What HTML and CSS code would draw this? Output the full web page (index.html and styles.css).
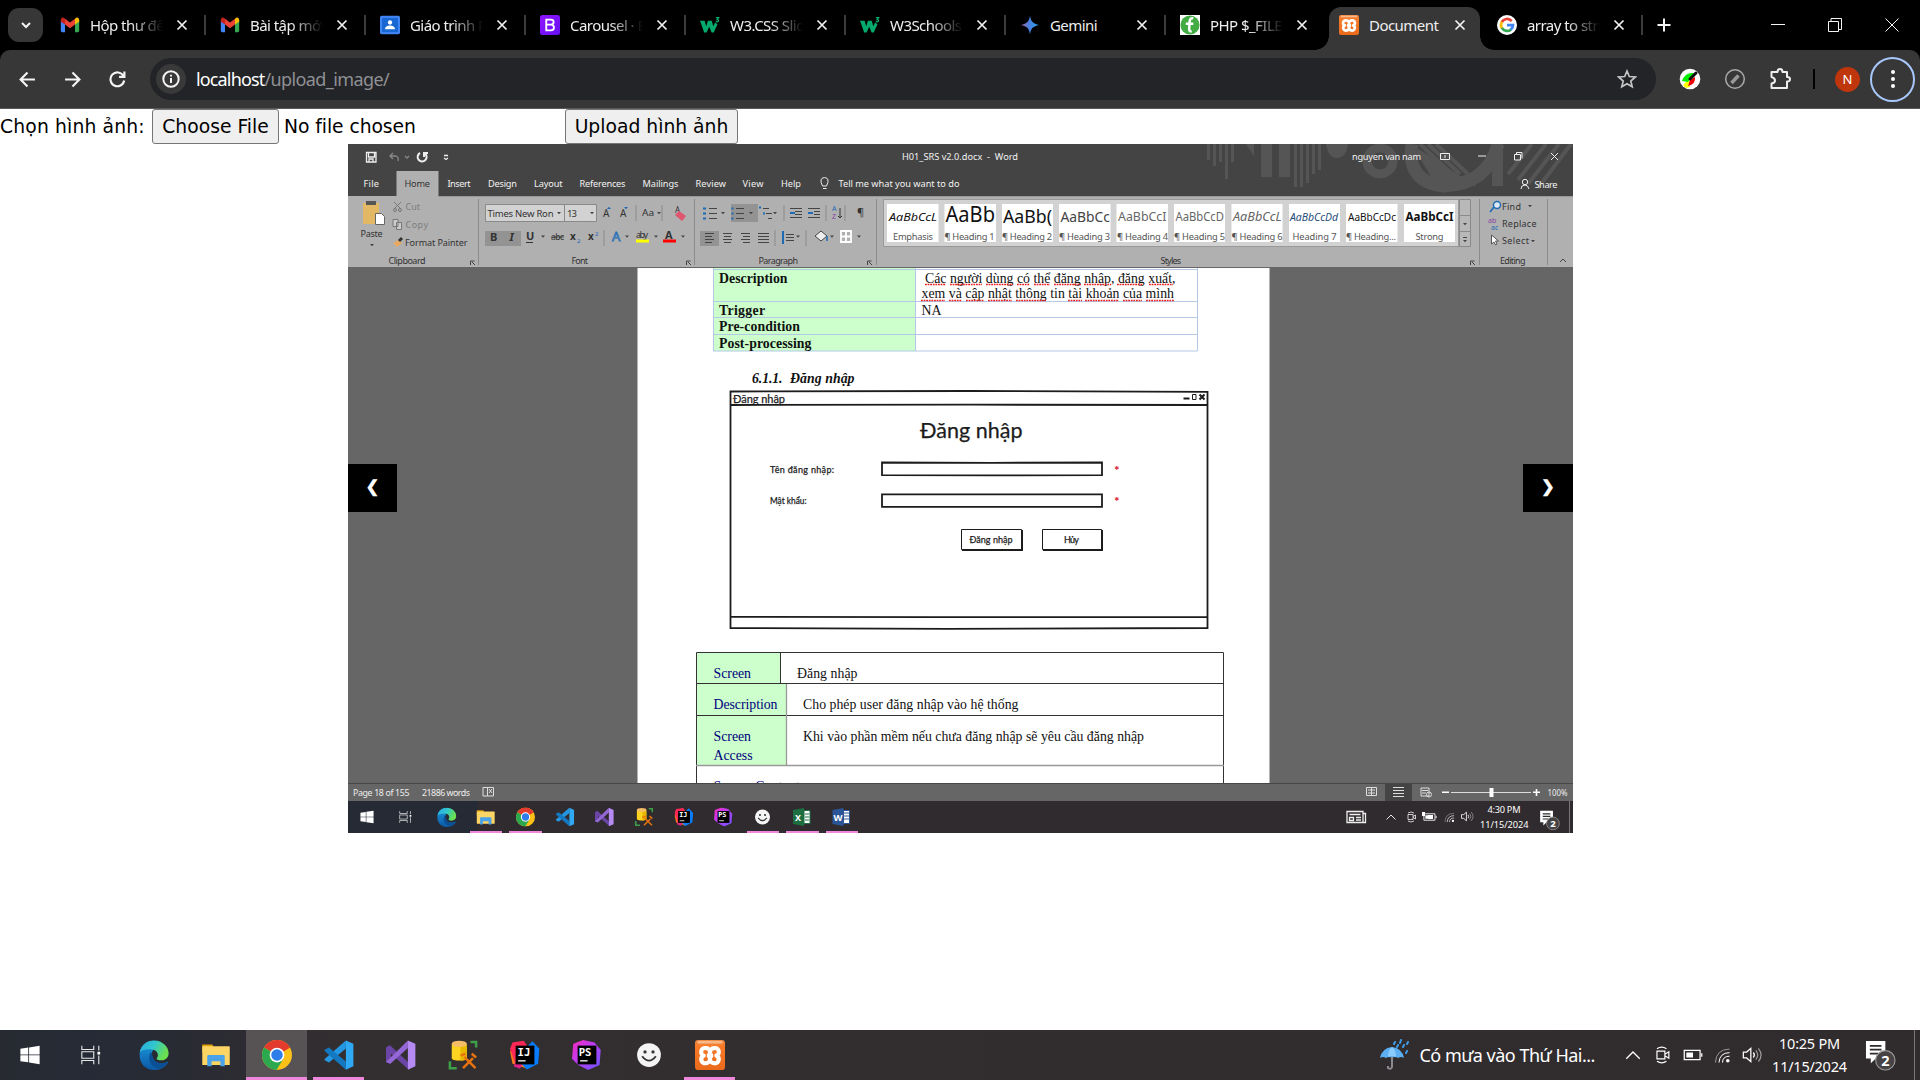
FILE: index.html
```html
<!DOCTYPE html>
<html lang="vi">
<head>
<meta charset="utf-8">
<title>Document</title>
<link rel="stylesheet" href="styles.css">
</head>
<body>
<svg class="defs" width="0" height="0" aria-hidden="true">
  <defs>
    <linearGradient id="edgeA" x1="0" y1="0" x2="1" y2="0.4"><stop offset="0" stop-color="#2aa7e0"/><stop offset=".5" stop-color="#30c6cf"/><stop offset="1" stop-color="#6be04f"/></linearGradient>
    <linearGradient id="edgeB" x1="0" y1="0" x2="0" y2="1"><stop offset="0" stop-color="#1a9be0"/><stop offset="1" stop-color="#0c59a4"/></linearGradient>
    <linearGradient id="gem" x1="0" y1="0" x2="1" y2="0"><stop offset="0" stop-color="#a56a9c"/><stop offset=".45" stop-color="#4a7fe0"/><stop offset="1" stop-color="#2aa3ea"/></linearGradient>
    <linearGradient id="bs" x1="0" y1="0" x2="1" y2="1"><stop offset="0" stop-color="#9013fe"/><stop offset="1" stop-color="#6610f2"/></linearGradient>
    <linearGradient id="ora" x1="0" y1="0" x2="0" y2="1"><stop offset="0" stop-color="#f08b45"/><stop offset=".2" stop-color="#f77b28"/><stop offset="1" stop-color="#ea6a1c"/></linearGradient>
    <linearGradient id="psg" x1="0" y1="0" x2="1" y2="1"><stop offset="0" stop-color="#f62ab8"/><stop offset=".4" stop-color="#c23af0"/><stop offset="1" stop-color="#6b57ff"/></linearGradient>
  </defs>
  <symbol id="i-gmail" viewBox="0 0 24 24"><path fill="#4285f4" d="M1 6v13c0 1 .7 1.700 1.700 1.700H6V10z"/><path fill="#34a853" d="M23 6v13c0 1-.7 1.700-1.700 1.700H18V10z"/><path fill="#ea4335" d="M6 11.500V4.500l6 4.600 6-4.600v7L12 16z"/><path fill="#c5221f" d="M1 6c0-3 3-4 5-1.500v7L1 8z"/><path fill="#fbbc04" d="M23 6c0-3-3-4-5-1.500v7L23 8z"/></symbol>
  <symbol id="i-class" viewBox="0 0 24 24"><rect y="1" width="24" height="22" rx="2" fill="#4285f4"/><rect x="2.500" y="3.500" width="19" height="17" fill="#1967d2"/><circle cx="12" cy="9" r="2.600" fill="#fff"/><path fill="#fff" d="M6 17c0-3 3-4.500 6-4.500s6 1.500 6 4.500z"/></symbol>
  <symbol id="i-boot" viewBox="0 0 24 24"><rect width="24" height="24" rx="3" fill="url(#bs)"/><path fill="none" stroke="#fff" stroke-width="2.200" d="M7.500 5.500h5.500c4.500 0 4.500 6 0 6H7.500zM7.500 11.500H13c5 0 5 7 0 7H7.500z"/></symbol>
  <symbol id="i-w3" viewBox="0 0 24 24"><path fill="#04aa6d" d="M0 7h5.500l2 6.500L9.500 7H14l2 6.500L18 9l3 2-4.500 10H14l-3-7-3 7H5z"/><path fill="none" stroke="#04aa6d" stroke-width="1.500" d="M19 3h3.500l-2 2.500c3 0 2 3.500-1.500 2.500"/></symbol>
  <symbol id="i-gem" viewBox="0 0 24 24"><path fill="url(#gem)" d="M12 1c1.200 7 3.500 9.500 11 11-7.500 1.500-9.800 4-11 11-1.200-7-3.500-9.500-11-11 7.500-1.500 9.800-4 11-11z"/></symbol>
  <symbol id="i-php" viewBox="0 0 24 24"><rect width="24" height="24" fill="#fff"/><circle cx="12" cy="12" r="11.500" fill="#43ab43"/><path fill="none" stroke="#fff" stroke-width="3" d="M16 4q-4-1-4.500 4l-.5 9q0 3 3 2.500M7 10.500h9"/></symbol>
  <symbol id="i-xampp" viewBox="0 0 24 24"><rect width="24" height="24" rx="2.500" fill="url(#ora)"/><rect x="2" y=".8" width="20" height="2" rx="1" fill="#f6b98c"/><path fill="none" stroke="#fff" stroke-width="3.300" stroke-linejoin="round" d="M9 6.500C4 5.500 4 12 7 12.500 3.500 14 5 19.500 9 18.500c2 0 3-2 3-4 0 2 1 4 3 4 4 1 5.500-4.500 2-6 3-.5 3-7-2-6-2 0-3 2-3 3.500 0-1.500-1-3.500-3-3.500zM9.500 12.500h5"/></symbol>
  <symbol id="i-google" viewBox="0 0 24 24"><circle cx="12" cy="12" r="12" fill="#fff"/><g fill="none" stroke-width="3.300"><path stroke="#ea4335" d="M17.600 7.300A7.200 7.200 0 0 0 5.800 8.500"/><path stroke="#fbbc04" d="M5.900 8.300a7.200 7.200 0 0 0 0 7.400"/><path stroke="#34a853" d="M5.800 15.500a7.200 7.200 0 0 0 11 1.800"/><path stroke="#4285f4" d="M12 12h7.200q0 3.300-2.700 5.600"/></g></symbol>
  <symbol id="i-x" viewBox="0 0 12 12"><path fill="none" stroke="#f2f2f2" stroke-width="1.700" d="M1.500 1.500l9 9M10.500 1.500l-9 9"/></symbol>

  <symbol id="i-win" viewBox="0 0 24 24"><path fill="#fff" d="M1.500 5.200l8.600-1.300v7.600H1.500zM11 3.700L22.500 2v9.500H11zM1.500 12.400h8.600V20l-8.600-1.300zM11 12.400h11.500V22L11 20.200z"/></symbol>
  <symbol id="i-task" viewBox="0 0 24 24"><path fill="none" stroke="#e8e8e8" stroke-width="1.200" d="M2 2v4h13V2M2 22v-4h13v4M2 8.500h13v7H2zM20.500 2v5M20.500 12.500V22"/><rect x="19" y="8.500" width="3" height="3" fill="#fff"/></symbol>
  <symbol id="i-edge" viewBox="0 0 24 24"><path fill="url(#edgeB)" d="M.5 11C1 4.500 6 .5 12 .5L18 8c-1.500-1.500-5-2.500-7 .5-2.500 4-.5 8 3.500 9.500 3.500 1.200 6 .3 8-.5.8-.3.900.1.600.600C21 21.500 17 24 12 24 5 24 0 18.500.5 11z"/><path fill="#0b4f94" d="M9.500 9.500C6 15 9.500 23 17 22.500c2.500-.5 4.500-2 6-4.500.200-.500-.1-.800-.6-.5-4.900 2.300-10.900.5-11.400-4.500z"/><path fill="url(#edgeA)" d="M.6 10C1.500 4 6.300.3 12 .3c7 0 11.700 5.200 11.700 10.200 0 3.500-2.700 5.700-6 5.700-2.200 0-4-.8-3.500-1.700 2.300-2.500.3-6.700-4-7C6 7.200 2 8 .6 10z"/></symbol>
  <symbol id="i-folder" viewBox="0 0 24 24"><path fill="#e3a008" d="M1 3.500h8l1.500 2.500H20v4H1z"/><rect x="1" y="5" width="22" height="15" rx=".5" fill="#fdd565"/><path fill="#4aa3e8" d="M5 21v-8q0-1 1-1h12q1 0 1 1v8h-3.500v-4h-7v4z"/></symbol>
  <symbol id="i-chrome" viewBox="0 0 24 24"><circle cx="12" cy="12" r="12" fill="#fbc116"/><path fill="#e33b2e" d="M12 12L1.600 6A12 12 0 0 1 22.400 6z"/><path fill="#2ca94f" d="M12 12L1.600 6a12 12 0 0 0 10 18l5.500-9z"/><path fill="#e33b2e" d="M12 6h10.400L12 12z"/><circle cx="12" cy="12" r="5.900" fill="#fff"/><circle cx="12" cy="12" r="4.600" fill="#2f7de8"/></symbol>
  <symbol id="i-code" viewBox="0 0 24 24"><path fill="#2497e3" d="M17.500.3v6.500L4 18 .5 16.200v-1z"/><path fill="#1478c0" d="M17.500 23.700v-6.500L4 6 .5 7.800v1z"/><path fill="#30a9f4" d="M17.500.3l6 2.700v18l-6 2.700z"/></symbol>
  <symbol id="i-vs" viewBox="0 0 24 24"><path fill="#6a45a5" d="M0 6l3-2 15 14v5.500L4 11v6l-1 2-3-1.500z"/><path fill="#9467d6" d="M0 17.500L17.500.3v6L3.500 19z"/><path fill="#b58af2" d="M17.500.3l6 2.700v18l-6 2.700z"/></symbol>
  <symbol id="i-ssms" viewBox="0 0 24 24"><path fill="#fdd321" d="M3 3v11.500c0 2.500 12 2.500 12 0V3z"/><path fill="#e8b800" d="M10 5h5v9.500c0 1.200-2 1.800-5 1.900z"/><ellipse cx="9" cy="3" rx="6" ry="2.500" fill="#f4bd66"/><path fill="none" stroke="#3da048" stroke-width="2" d="M18 1.500h4.500V6M1.500 17v5.500H7"/><path fill="none" stroke="#e8730e" stroke-width="2" d="M12 22.500l8-8M13 13.500l9 9M10 12.500l4-1.500M19 11l3.500 3"/></symbol>
  <symbol id="i-ij" viewBox="0 0 24 24"><path fill="#ff7a1a" d="M0 9l7-4 7 18-12-4z"/><path fill="#fe2857" d="M2 2l9-1.500 4 6L5 21 0 7z"/><path fill="#087cfa" d="M14 5l4-4 5.500 6-1 12-9 4.500L9 19z"/><path fill="#e0218a" d="M5 15l-2 6 5 2 3-6z"/><rect x="4.500" y="4.500" width="15" height="15"/><text x="6" y="12.500" class="jb">IJ</text><path fill="#ccc" d="M6.500 16h6v1.300h-6z"/></symbol>
  <symbol id="i-ps" viewBox="0 0 24 24"><path fill="url(#psg)" d="M1 3l8-3 9 2 5 6-1 12-9 4-8-4-5-5z"/><rect x="4.500" y="4.500" width="15" height="15"/><text x="5.300" y="12.500" class="jb">PS</text><path fill="#ccc" d="M6.500 16h6v1.300h-6z"/></symbol>
  <symbol id="i-smile" viewBox="0 0 24 24"><circle cx="12" cy="12" r="9.500" fill="#f4f4f4"/><circle cx="8.800" cy="9.500" r="1.300" fill="#333"/><circle cx="15.200" cy="9.500" r="1.300" fill="#333"/><path fill="none" stroke="#333" stroke-width="1.500" d="M6.500 13q5.500 7 11 0"/></symbol>
  <symbol id="i-chev" viewBox="0 0 24 24"><path fill="none" stroke="#fff" stroke-width="1.800" d="M3 17l9-9 9 9"/></symbol>
  <symbol id="i-cam" viewBox="0 0 24 24"><path fill="none" stroke="#fff" stroke-width="1.500" d="M5 7h10v10H5zM15 11l5-3v8l-5-3M5 4q6-4 12 0M5 20q6 4 12 0"/></symbol>
  <symbol id="i-bat" viewBox="0 0 24 24"><path fill="none" stroke="#fff" stroke-width="1.500" d="M1.500 6.500h19v11h-19zM22.500 10v4"/><rect x="4" y="9" width="8" height="6" fill="#fff"/></symbol>
  <symbol id="i-wifi" viewBox="0 0 24 24"><g fill="none" stroke="#fff" stroke-width="1.400"><path stroke="#999" d="M2 22Q3 3 22 3"/><path d="M7 22Q8 8 22 8M12 22q0-9 10-9"/></g><circle cx="19.500" cy="19.500" r="2.500" fill="#fff"/></symbol>
  <symbol id="i-vol" viewBox="0 0 24 24"><g fill="none" stroke="#fff" stroke-width="1.500"><path d="M1 8.500h4L10 4v16l-5-4.500H1zM13 9q2.500 3 0 6"/><path stroke="#999" d="M16 6.500q4.500 5.500 0 11M19 4q6.500 8 0 16"/></g></symbol>
  <symbol id="i-note" viewBox="0 0 32 32"><path fill="#fff" d="M1 1h20v18H11l-5 5v-5H1z"/><path stroke="#302b2e" stroke-width="1.700" d="M5 6h12M5 10h12M5 14h9"/><circle cx="21" cy="21" r="10" fill="#474345" stroke="#999" stroke-width="1.200"/><text x="21" y="26.500" text-anchor="middle" class="badge-num">2</text></symbol>
</svg>

<header class="browser">
  <div class="tabs">
    <div class="tab-search"><svg width="12" height="12" viewBox="0 0 12 12"><path d="M2 4l4 4 4-4" class="ln thick"/></svg></div>
    <div class="tab"><svg class="fav"><use href="#i-gmail"/></svg><span class="ttl fade">Hộp thư đến</span><svg class="cls"><use href="#i-x"/></svg></div>
    <div class="tab"><svg class="fav"><use href="#i-gmail"/></svg><span class="ttl fade">Bài tập mới</span><svg class="cls"><use href="#i-x"/></svg></div>
    <div class="tab"><svg class="fav"><use href="#i-class"/></svg><span class="ttl fade">Giáo trình P</span><svg class="cls"><use href="#i-x"/></svg></div>
    <div class="tab"><svg class="fav"><use href="#i-boot"/></svg><span class="ttl fade">Carousel · B</span><svg class="cls"><use href="#i-x"/></svg></div>
    <div class="tab"><svg class="fav"><use href="#i-w3"/></svg><span class="ttl fade">W3.CSS Slid</span><svg class="cls"><use href="#i-x"/></svg></div>
    <div class="tab"><svg class="fav"><use href="#i-w3"/></svg><span class="ttl fade">W3Schools</span><svg class="cls"><use href="#i-x"/></svg></div>
    <div class="tab"><svg class="fav"><use href="#i-gem"/></svg><span class="ttl">Gemini</span><svg class="cls"><use href="#i-x"/></svg></div>
    <div class="tab last"><svg class="fav"><use href="#i-php"/></svg><span class="ttl fade">PHP $_FILES</span><svg class="cls"><use href="#i-x"/></svg></div>
    <div class="tab active"><svg class="fav"><use href="#i-xampp"/></svg><span class="ttl">Document</span><svg class="cls"><use href="#i-x"/></svg></div>
    <div class="tab"><svg class="fav"><use href="#i-google"/></svg><span class="ttl fade">array to stri</span><svg class="cls"><use href="#i-x"/></svg></div>
    <svg class="plus" width="14" height="14" viewBox="0 0 14 14"><path d="M7 .5v13M.5 7h13" class="ln thick"/></svg>
    <div class="winctl">
      <svg width="14" height="14" viewBox="0 0 14 14"><path d="M0 6.500h14" class="ln"/></svg>
      <svg width="14" height="14" viewBox="0 0 14 14"><path d="M.5 3.500h10v10h-10zM3 3V.5h10.500v11H11" class="ln"/></svg>
      <svg width="14" height="14" viewBox="0 0 14 14"><path d="M.5.5l13 13M13.500.5l-13 13" class="ln"/></svg>
    </div>
  </div>
  <div class="toolbar">
    <svg class="nav" viewBox="0 0 16 16"><path d="M15 8H2M8 1.500L1.500 8 8 14.500" class="ln thick"/></svg>
    <svg class="nav" viewBox="0 0 16 16"><path d="M1 8h13M8 1.500L14.500 8 8 14.500" class="ln thick"/></svg>
    <svg class="nav" viewBox="0 0 16 16"><path d="M13.500 4.500A6.500 6.500 0 1 0 14.300 9M14.500.5v5h-5" class="ln thick"/></svg>
    <div class="omnibox">
      <span class="info"><svg width="18" height="18" viewBox="0 0 18 18"><circle cx="9" cy="9" r="7.700" class="ln thick"/><path d="M9 8v5M9 4.800v1.800" class="ln thick"/></svg></span>
      <span class="url">localhost<span class="path">/upload_image/</span></span>
      <svg class="star" width="20" height="20" viewBox="0 0 20 20"><path d="M10 2l2.300 5.500 6 .5-4.500 4 1.400 5.800L10 14.700l-5.200 3.100L6.200 12 1.700 8l6-.5z"/></svg>
    </div>
    <svg class="ext" viewBox="0 0 22 22"><circle cx="11" cy="11" r="10.300" fill="#fff"/><path fill="#ff0" d="M4 17l6-6 1 8-4 1z"/><path fill="#0e0" d="M3 13q3-9 12-8l-6 9z"/><path fill="#e00" d="M9 18q8-2 7-9l-5 3z"/><path stroke="#111" stroke-width="3" stroke-linecap="round" d="M11 11l6-6"/></svg>
    <svg class="ext" viewBox="0 0 22 22"><circle cx="11" cy="11" r="9.300" fill="none" stroke="#aaa" stroke-width="1.500"/><path stroke="#999" stroke-width="3.500" d="M7.500 15l7-7.500"/></svg>
    <svg class="ext" viewBox="0 0 22 22"><path fill="none" stroke="#eee" stroke-width="2" stroke-linejoin="round" d="M2.500 4h6q0-3 2.500-3t2.500 3h4.500v5q3 0 3 2.300T18 13.500V20H2.500v-4.500q3.500-.5 3.500-3T2.500 9z"/></svg>
    <i class="bar"></i>
    <span class="avatar">N</span>
    <span class="menu"><i></i><i></i><i></i></span>
  </div>
</header>

<main class="page">
  <form class="upload">
    <label>Chọn hình ảnh:</label>
    <span class="file"><button type="button">Choose File</button><span class="none">No file chosen</span></span>
    <button type="button">Upload hình ảnh</button>
  </form>
  <section class="slides">
    <svg class="slide" width="1225" height="689" viewBox="348 144 1225 689">
      <rect x="348" y="144" width="1225" height="689" fill="#666"/>
      <rect x="348" y="144" width="1225" height="52" fill="#444"/>
      <g fill="#555">
        <path d="M1207 144h3v16h-3zM1213 144h3v22h-3zM1219 144h3v18h-3zM1225 144h3v35h-3zM1231 144h3v18h-3zM1246 144h8v12zM1261 144h11v33h-11zM1279 144h11v33h-11zM1294 144h3v43h-3zM1300 144h3v43h-3zM1306 144h3v39h-3zM1312 144h3v30h-3zM1318 144h3v26h-3z"/>
        <path d="M1326 144h22q-2 14-11 14t-11-14z"/>
        <path d="M1411 144l65 42h-39zM1492 144h11v42h-11z"/>
      </g>
      <g fill="none" stroke="#555"><circle cx="1380" cy="161" r="13" stroke-width="9"/><path stroke-width="13" d="M1412 144q-6 38 32 42 44-2 54-42"/><path stroke-width="4" d="M1420 144l32 30M1428 144l32 30M1436 144l32 30M1518 180l28-36M1528 184l31-40M1538 188l33-44M1508 174l24-30"/></g>

      <g fill="none" stroke="#eee" stroke-width="1.300"><path d="M366.500 152.500h9.500v9.500h-9.500zM368.500 153v4h6v-4M369 162v-3h4v3"/><path stroke="#888" d="M393 153l-3 3 3 3M390 156h6q3 1 2 5"/><path stroke-width="2" d="M420 153a4.500 4.500 0 1 0 5 .5M424 157v-4h4"/><path stroke="#888" d="M405 156l2 2 2-2"/><path d="M444 155.500h4M444 158l2 1.500 2-1.500"/></g>
      <g class="ui" fill="#f2f2f2" font-size="9.200">
        <text x="902" y="160" textLength="116">H01_SRS v2.0.docx &#160;- &#160;Word</text>
        <text x="1352" y="160" textLength="69">nguyen van nam</text>
        <text x="363.500" y="187" textLength="15.500">File</text>
        <rect x="396.500" y="171" width="42" height="26" fill="#b0b0b0"/>
        <text x="404.500" y="187" textLength="25.500" fill="#333">Home</text>
        <text x="447.500" y="187" textLength="23">Insert</text><text x="488" y="187" textLength="29">Design</text><text x="534" y="187" textLength="28.500">Layout</text><text x="579.500" y="187" textLength="46">References</text><text x="642.500" y="187" textLength="36">Mailings</text><text x="695.500" y="187" textLength="30.500">Review</text><text x="742.500" y="187" textLength="21">View</text><text x="781" y="187" textLength="20">Help</text><text x="838.500" y="187" textLength="121">Tell me what you want to do</text><text x="1534.500" y="188" textLength="23">Share</text>
      </g>
      <g fill="none" stroke="#eee"><path d="M822.500 186q-4-8 2-8.500 6 .5 2 8.500zM823 188.500h3.500M1440.500 153.500h9v6h-9zM1445 158v-3M1478 156h8M1514.500 154.500h6v5.500h-6zM1516.500 154v-1.500h5.500v6M1551 153l7 7M1558 153l-7 7M1521 189q0-4 4-4 3 0 4 4"/><circle cx="1525" cy="182" r="2.700"/></g>

      <rect x="348" y="196" width="1225" height="71" fill="#b0b0b0"/>
      <path stroke="#999" d="M438 196.500h1135"/>
      <path stroke="#8a8a8a" d="M478.500 199v66M694.500 199v66M876.500 199v66M1479.500 199v66M1547.500 199v66M636 205v16M662 205v16M604 230v16M784 205v16M826 205v16M845 205v16M775 230v16M806 230v16"/>
      <path fill="#e3b864" d="M363 203h16v21h-16z"/><path fill="#555" d="M366 201h10v4h-10z"/><path fill="#fff" stroke="#666" d="M375.500 213.500h6l3 3v8h-9z"/>
      <g fill="none" stroke="#777"><path d="M394 202l7 7M401 202l-7 7"/><circle cx="395" cy="210" r="1.500"/><circle cx="400" cy="210" r="1.500"/><path fill="#ccc" d="M393 219.500h5v7h-5zM396.500 222.500h5v7h-5z"/></g>
      <path fill="#e9a960" d="M393 243l6-3 3 3-5 4z"/><path stroke="#333" stroke-width="3" d="M399 241l3-3"/>
      <g class="ui" font-size="9" fill="#333">
        <text x="405.500" y="210" textLength="14.500" fill="#7d7d7d">Cut</text><text x="405.500" y="228" textLength="22.500" fill="#7d7d7d">Copy</text><text x="405" y="246" textLength="62.500">Format Painter</text><text x="360.500" y="237" textLength="22">Paste</text>
        <text x="388.500" y="264" textLength="37">Clipboard</text><text x="571.500" y="264" textLength="16.500">Font</text><text x="758.500" y="264" textLength="39.500">Paragraph</text><text x="1160.500" y="264" textLength="20.500">Styles</text><text x="1500" y="264" textLength="25.500">Editing</text>
        <text x="1502" y="210" textLength="19">Find</text><text x="1502" y="227" textLength="34.500">Replace</text><text x="1502" y="244" textLength="27">Select</text>
      </g>
      <g fill="#d2d2d2" stroke="#8a8a8a"><path d="M485.500 204.500h79v17h-79zM564.500 204.500h32v17h-32z"/></g>
      <g fill="#939393"><path d="M485 231h36v15h-36zM731 204h27v18h-27zM700 231h19v15h-19z"/></g>
      <g class="ui" fill="#333">
        <text x="487.500" y="216.500" font-size="9.500" textLength="66">Times New Ron</text><text x="567" y="216.500" font-size="9.500" textLength="10">13</text>
        <text x="603" y="217" font-size="10">A</text><text x="620" y="217" font-size="10">A</text><text x="642" y="216" font-size="9.500" textLength="12" lengthAdjust="spacingAndGlyphs">Aa</text><text x="675" y="213" font-size="8">A</text>
        <text x="490" y="240.500" font-size="11" font-weight="700">B</text><text x="509.500" y="240.500" font-size="11" font-weight="700" class="it">I</text><text x="526" y="240" font-size="11" font-weight="700">U</text><text x="551" y="240" font-size="8.500" text-decoration="line-through" textLength="13">abc</text><text x="570" y="240" font-size="10" font-weight="700">x</text><text x="588" y="240" font-size="10" font-weight="700">x</text><text x="577" y="243" font-size="6" fill="#1f6ab5">2</text><text x="595" y="236" font-size="6" fill="#1f6ab5">2</text>
        <text x="612" y="241" font-size="13" fill="#b0c8e0" stroke="#2a6fb3" stroke-width=".8">A</text><text x="636" y="238" font-size="9" textLength="12">aby</text><text x="665" y="239" font-size="11" font-weight="700">A</text><text x="857" y="216" font-size="11">¶</text>
        <text x="832" y="211" font-size="7" fill="#1f6ab5">A</text><text x="832" y="219" font-size="7" fill="#8543a5">Z</text>
        <text x="1488" y="223" font-size="7" fill="#8543a5">ab</text><text x="1491" y="230" font-size="7" fill="#1f6ab5">ac</text>
      </g>
      <path stroke="#333" d="M526 242.500h7M840 208v10l-2-2M840 218l2-2" fill="none"/>
      <path fill="#ff0" d="M636 239.500h13v3h-13z"/><path fill="red" d="M663 239.500h13v3h-13z"/><path fill="#e0566e" d="M675 215l4-4 7 5-4 5z"/>
      <g fill="#444"><path d="M370 244h4l-2 2.300zM557 212h4l-2 2.300zM590 212h4l-2 2.300zM541 235.500h4l-2 2.300zM657 212h4l-2 2.300zM625 235.500h4l-2 2.300zM654 235.500h4l-2 2.300zM681 235.500h4l-2 2.300zM721 212h4l-2 2.300zM749 212h4l-2 2.300zM773 212h4l-2 2.300zM796 235.500h4l-2 2.300zM830 235.500h4l-2 2.300zM857 235.500h4l-2 2.300zM1528 205h4l-2 2.300zM1531 240h4l-2 2.300z"/></g>
      <path fill="#1f6ab5" d="M607 209l2-2.300 2 2.300zM624 207l2 2.300 2-2.300z"/>
      <g fill="none" stroke="#444"><path d="M709 208.500h8M709 213.500h8M709 218.500h8M736 208.500h8M736 213.500h8M736 218.500h8M763 208.500h6M766 213.500h6M768 218.500h4M790 208.500h12M795 211.500h7M795 214.500h7M790 217.500h12M808 208.500h12M814 211.500h6M814 214.500h6M808 217.500h12M705 233.500h9M705 236.500h7M705 239.500h9M705 242.500h7M723 233.500h9M724 236.500h7M723 239.500h9M724 242.500h7M741 233.500h9M743 236.500h7M741 239.500h9M743 242.500h7M758 233.500h11M758 236.500h11M758 239.500h11M758 242.500h11M786 234.500h8M786 237.500h8M786 240.500h8"/><path stroke="#1f6ab5" stroke-width="2" d="M703 208.500h3M703 213.500h3M703 218.500h3M731.500 208.500h2M731.500 213.500h2M731.500 218.500h2M759 207.500h2M763 213.500h2M790 213h5M808 213h5M783 231v13"/><path fill="#eee" d="M815 236l6-5 6 5-6 5z"/><path stroke="#1f6ab5" stroke-width="1.500" d="M827 236v5"/><path stroke="#fff" stroke-width="1.800" d="M841 231h10v11h-10zM846 231v11M841 236.500h10"/><path d="M470.500 265v-4h4M472 262l3 3M686.500 265v-4h4M688 262l3 3M867.500 265v-4h4M869 262l3 3M1470.500 265v-4h4M1472 262l3 3M1560 262l3-3 3 3"/><path stroke="#1f6ab5" stroke-width="1.600" d="M1494 207l-4 5"/><circle cx="1497" cy="205" r="3.500" fill="#dfe9f3" stroke="#1f6ab5" stroke-width="1.500"/><path fill="#fff" stroke="#555" d="M1491.500 235v9l2.500-2 1.500 3 1.500-1-1.500-3h3z"/></g>

      <rect x="883.500" y="199.500" width="575" height="47" fill="#d2d2d2" stroke="#999"/>
      <g fill="#fff"><path d="M887 204h51.500v38H887zM944.500 204h51.500v38h-51.500zM1002 204h51v38h-51zM1059 204h51.500v38H1059zM1116.500 204h51.500v38h-51.500zM1174 204h51v38h-51zM1231.500 204h51v38h-51zM1289 204h51v38h-51zM1346 204h51.500v38H1346zM1404 204h51v38h-51z"/></g>
      <g class="ui" fill="#111">
        <text x="889" y="220.500" font-size="11.500" class="it" textLength="48" lengthAdjust="spacingAndGlyphs">AaBbCcL</text><text x="945.500" y="222.300" font-size="22" textLength="49.500" lengthAdjust="spacingAndGlyphs">AaBb</text><text x="1003" y="222.500" font-size="17.500" textLength="49" lengthAdjust="spacingAndGlyphs">AaBb(</text><text x="1060.500" y="221.500" font-size="15" fill="#444" textLength="49.500" lengthAdjust="spacingAndGlyphs">AaBbCc</text><text x="1118" y="221" font-size="13" fill="#666" textLength="48.500" lengthAdjust="spacingAndGlyphs">AaBbCcI</text><text x="1175.500" y="220.500" font-size="12" fill="#666" textLength="48.500" lengthAdjust="spacingAndGlyphs">AaBbCcD</text><text x="1233" y="220.500" font-size="12" class="it" fill="#666" textLength="48.500" lengthAdjust="spacingAndGlyphs">AaBbCcL</text><text x="1290" y="220.500" font-size="10.500" class="it" fill="#1f4e79" textLength="48" lengthAdjust="spacingAndGlyphs">AaBbCcDd</text><text x="1348" y="220.500" font-size="11" textLength="48" lengthAdjust="spacingAndGlyphs">AaBbCcDc</text><text x="1405.500" y="220.500" font-size="11.500" font-weight="700" textLength="48" lengthAdjust="spacingAndGlyphs">AaBbCcI</text>
      </g>
      <g class="ui" fill="#555" font-size="9.300"><text x="893" y="239.500" textLength="40">Emphasis</text><text x="944.500" y="239.500" textLength="50">¶ Heading 1</text><text x="1002" y="239.500" textLength="50">¶ Heading 2</text><text x="1059" y="239.500" textLength="51">¶ Heading 3</text><text x="1117" y="239.500" textLength="51">¶ Heading 4</text><text x="1174" y="239.500" textLength="51">¶ Heading 5</text><text x="1231.500" y="239.500" textLength="51">¶ Heading 6</text><text x="1292.500" y="239.500" textLength="44">Heading 7</text><text x="1346" y="239.500" textLength="50">¶ Heading...</text><text x="1415.500" y="239.500" textLength="28">Strong</text></g>
      <path fill="#b8b8b8" stroke="#8a8a8a" d="M1459.500 199.500h11v16h-11zM1459.500 215.500h11v16h-11zM1459.500 231.500h11v15h-11z"/><path fill="#444" d="M1463 223h4l-2 2.300zM1463 240h4l-2 2.300zM1463 237h4v1h-4z"/>

      <rect x="637.500" y="268" width="632" height="515" fill="#fff"/>
      <rect x="713" y="268" width="202.500" height="83" fill="#cfc"/>
      <path fill="none" stroke="#b4c9e6" d="M713 269.500h484.500M713 301.500h484.500M713 317.500h484.500M713 334.500h484.500M713 351h484.500M713.500 268v83M915.500 268v83M1197.500 268v83"/>
      <g class="doc" font-size="13.800" fill="#111">
        <g font-weight="700"><text x="719" y="282.500" textLength="68.500">Description</text><text x="719" y="314.500" textLength="46">Trigger</text><text x="719" y="330.800" textLength="81">Pre-condition</text><text x="719" y="347.500" textLength="92.500">Post-processing</text><g class="it"><text x="752" y="383" textLength="30.500">6.1.1.</text><text x="790" y="383" textLength="64.500">Đăng nhập</text></g></g>
        <text x="925" y="282.500" textLength="250.500">Các người dùng có thể đăng nhập, đăng xuất,</text><text x="921.500" y="298.300" textLength="252.500">xem và cập nhật thông tin tài khoản của mình</text><text x="921.500" y="315" textLength="20">NA</text>
        <text x="797" y="678" textLength="60.500">Đăng nhập</text><text x="803" y="709" textLength="215.500">Cho phép user đăng nhập vào hệ thống</text><text x="803" y="741" textLength="341">Khi vào phần mềm nếu chưa đăng nhập sẽ yêu cầu đăng nhập</text>
      </g>
      <path fill="none" stroke="#e82020" stroke-width="1.500" stroke-dasharray="1.800 .8" d="M925 284.500h21M950 284.500h32M986 284.500h27M1017 284.500h13M1034 284.500h16M1054 284.500h27M1084 284.500h27M1117 284.500h26M1149 284.500h24M921 300.500h24M949 300.500h13M966 300.500h18M988 300.500h24M1016 300.500h30M1068 300.500h14M1085 300.500h34M1123 300.500h19M1146 300.500h28"/>
      <g fill="none" stroke="#1c1c1c" stroke-width="1.800"><path d="M730.500 391.500L970 391l237.500.8V628l-260 .8-217-.8zM731 405l240-.300 237 .300M731 616.800l200 .3 277-.2"/><path d="M882 462.500l110 .3 110-.3v12.600l-110 .3-110-.3zM882 494.300h220v12.500H882z"/></g>
      <g fill="#fff" stroke="#1c1c1c"><path d="M961.500 529.500h60v20h-60zM1042.500 529.500h59v20h-59z"/><path fill="none" stroke-width="2" d="M962 550h60V530M1043 550h59V530M1183.500 398.500h6"/><path d="M1192.500 394.500h3.500v5h-3.500z"/><path stroke-width="2" d="M1199.500 394.500l5 5M1204.500 394.500l-5 5"/></g>
      <g class="hand" fill="#1c1c1c" stroke="#1c1c1c" stroke-width=".25"><text x="733" y="402.800" font-size="11" textLength="52">Đăng nhập</text><text x="920" y="437.500" font-size="21.500" textLength="102.500">Đăng nhập</text><text x="770" y="472.500" font-size="9" textLength="64">Tên đăng nhập:</text><text x="770" y="503.500" font-size="9" textLength="36.500" lengthAdjust="spacingAndGlyphs">Mật khẩu:</text><text x="969.500" y="542.800" font-size="9" textLength="43">Đăng nhập</text><text x="1064" y="542.800" font-size="9" textLength="15">Hủy</text><g fill="#e01030" stroke="#e01030" font-size="12"><text x="1114.300" y="475">*</text><text x="1114.300" y="506">*</text></g></g>
      <path fill="#cfc" d="M696.500 652.500h84v31h-84zM696.500 683.500h90v82h-90z"/>
      <path fill="none" stroke="#333" d="M696.500 783V652.500h527V783M696 683.500h528M696 715.500h528M780.500 652v31"/><path fill="none" stroke="#999" stroke-width="1.300" d="M786.500 684v81M696 765.500h528"/>
      <g class="doc" font-size="13.800" fill="#00007e"><text x="713.500" y="678" textLength="37.500">Screen</text><text x="713.500" y="709" textLength="64">Description</text><text x="713.500" y="741" textLength="37.500">Screen</text><text x="713.500" y="760" textLength="39">Access</text><text x="713.500" y="790.500" textLength="86">Screen Content</text></g>

      <rect x="348" y="783" width="1225" height="19" fill="#666"/><path stroke="#474747" d="M348 783.500h1225"/>
      <rect x="1385" y="784" width="27" height="17" fill="#444"/>
      <g class="ui" fill="#eee" font-size="8.800"><text x="353" y="795.500" textLength="56.500">Page 18 of 155</text><text x="422" y="795.500" textLength="48">21886 words</text><text x="1547.500" y="795.500" textLength="20" lengthAdjust="spacingAndGlyphs">100%</text></g>
      <g fill="none" stroke="#ddd"><path d="M483 787.500h4.500v8.500H483zM487.500 796v-8.500h6v8.500zM489 789l3 4M492 789l-3 4M1366.500 787.500h10v8h-10zM1371.500 788v8M1368 790h7M1368 793h7M1393 787.500h11M1393 790.500h11M1393 793.500h11M1393 796.500h11M1421 788h8v8h-8zM1422 790.500h6M1422 793h4"/><circle cx="1429" cy="794.500" r="2.500"/><path d="M1451 792.500h80"/><path stroke="#fff" stroke-width="1.600" d="M1442 792.300h7M1533 792.300h7M1536.500 789v7M1491.500 788v9"/><path stroke="#fff" stroke-width="4" d="M1491.500 788v9"/></g>
      <rect x="348" y="801" width="1225" height="32" fill="#302b2e"/><rect x="348" y="801" width="130" height="32" fill="#262a34"/>
      <g><use href="#i-win" x="359.500" y="809.500" width="15" height="15"/><use href="#i-task" x="398" y="810" width="15" height="14"/><use href="#i-edge" x="437" y="807.500" width="19.500" height="19.500"/><use href="#i-folder" x="476" y="807.500" width="19.500" height="19.500"/><use href="#i-chrome" x="516" y="807.500" width="19" height="19"/><use href="#i-code" x="555.500" y="807.500" width="19" height="19"/><use href="#i-vs" x="595" y="807.500" width="19" height="19"/><use href="#i-ssms" x="634.500" y="807.500" width="19" height="19"/><use href="#i-ij" x="674.500" y="807.500" width="19" height="19"/><use href="#i-ps" x="714" y="807.500" width="19" height="19"/><use href="#i-smile" x="753" y="807.500" width="19" height="19"/></g>
      <path fill="#1d6f42" d="M793 810l11-2v18l-11-2z"/><path fill="#fff" stroke="#1d6f42" d="M804 810.500h6v13h-6z"/><path stroke="#1d6f42" d="M805 814h4M805 817h4M805 820h4"/><path fill="#2a5699" d="M832.500 810l11-2v18l-11-2z"/><path fill="#fff" stroke="#2a5699" d="M843.500 810.500h6v13h-6z"/><path stroke="#2a5699" d="M844 813h5M844 816h5M844 819h5"/>
      <g class="ui" fill="#fff" font-size="9" font-weight="700"><text x="795" y="820.500">X</text><text x="833.500" y="820.500" textLength="9" lengthAdjust="spacingAndGlyphs">W</text></g>
      <path fill="#ee86dc" d="M470 831h32v2h-32zM509 831h33v2h-33zM747 831h32v2h-32zM786 831h33v2h-33zM826 831h32v2h-32z"/>
      <path fill="none" stroke="#eee" stroke-width="1.300" d="M1347 811.500h16v11h-16zM1363 813.500h2.500v9H1363M1349.500 814.500h11M1349.500 817.500h4v3h-4zM1356 817.500h5M1356 820h5"/>
      <use href="#i-chev" x="1385" y="811" width="12" height="12"/><use href="#i-cam" x="1405" y="811" width="13" height="12"/><use href="#i-bat" x="1423" y="810" width="14" height="14"/><path fill="#fff" d="M1422 812h3v4h-3zM1428 815h5v4h-5z"/><use href="#i-wifi" x="1444" y="812" width="11" height="11"/><use href="#i-vol" x="1461" y="810" width="13" height="13"/>
      <g class="ui" fill="#fff" font-size="9.200"><text x="1487.500" y="813" textLength="33">4:30 PM</text><text x="1480" y="828" textLength="48.500">11/15/2024</text></g>
      <use href="#i-note" x="1539.500" y="810" width="20.500" height="20.500"/><path stroke="#777" d="M1569.500 801v32"/>
    </svg>
    <button class="arrow prev" type="button">❮</button>
    <button class="arrow next" type="button">❯</button>
  </section>
</main>

<footer class="taskbar">
  <span class="app"><svg class="sm"><use href="#i-win"/></svg></span>
  <span class="app"><svg class="sm"><use href="#i-task"/></svg></span>
  <span class="app"><svg><use href="#i-edge"/></svg></span>
  <span class="app"><svg><use href="#i-folder"/></svg></span>
  <span class="app current"><svg><use href="#i-chrome"/></svg></span>
  <span class="app open"><svg><use href="#i-code"/></svg></span>
  <span class="app"><svg><use href="#i-vs"/></svg></span>
  <span class="app"><svg><use href="#i-ssms"/></svg></span>
  <span class="app"><svg><use href="#i-ij"/></svg></span>
  <span class="app"><svg><use href="#i-ps"/></svg></span>
  <span class="app"><svg><use href="#i-smile"/></svg></span>
  <span class="app open"><svg><use href="#i-xampp"/></svg></span>
  <div class="weather">
    <svg width="30" height="32" viewBox="0 0 30 32"><path fill="#5cb0f2" d="M1 19Q3 9 13 8q10 1 12 11-3-2-6 0-3-2-6 0-3-2-6 0-3-2-6 0z"/><path fill="#8accff" d="M9 18q0-7 4-10 4 3 4 10-4-2-8 0z"/><path fill="none" stroke="#8a8a8f" stroke-width="2" d="M13 18v10q-1 3-4 1v-2"/><path stroke="#3d9be8" stroke-width="2" stroke-linecap="round" d="M16 3l-1 2M22 1l-1 3M19 6l-1 2M25 6l-1 2M29 3l-1 2M28 12l-1 2"/></svg>
    <span>Có mưa vào Thứ Hai...</span>
  </div>
  <div class="tray">
    <svg width="18" height="18"><use href="#i-chev"/></svg>
    <svg width="19" height="20"><use href="#i-cam"/></svg>
    <svg width="20" height="20"><use href="#i-bat"/></svg>
    <svg width="17" height="17"><use href="#i-wifi"/></svg>
    <svg width="21" height="20"><use href="#i-vol"/></svg>
  </div>
  <div class="clock"><span>10:25 PM</span><span>11/15/2024</span></div>
  <svg class="note" width="31" height="31"><use href="#i-note"/></svg>
  <i class="peek"></i>
</footer>
</body>
</html>
```
FILE: styles.css
```css
* { box-sizing: border-box; }
body { margin: 0; width: 1920px; height: 1080px; overflow: hidden; display: flex; flex-direction: column; background: #fff; font-family: "Noto Sans", "Open Sans", sans-serif; }
svg { display: block; flex: none; }
.defs { position: absolute; }
.ln { fill: none; stroke: #f4f4f4; stroke-width: 1; }
.thick { stroke-width: 2; }
.jb { font: 700 8.5px "DejaVu Sans Mono", monospace; fill: #fff; }
.badge-num { font: 700 15px "Noto Sans", sans-serif; fill: #fff; }

.browser { flex: none; height: 109px; background: #000; }
.tabs { height: 50px; display: flex; align-items: center; padding-left: 8px; }
.tab-search { width: 35px; height: 34px; margin-right: 3px; border-radius: 11px; background: #373737; display: flex; align-items: center; justify-content: center; }
.tab { width: 160px; height: 20px; padding-left: 15px; display: flex; align-items: center; border-right: 2px solid #3c3c3c; }
.fav { width: 20px; height: 20px; margin-left: -1px; }
.ttl { width: 73px; margin-left: 10px; font-size: 15px; letter-spacing: -.55px; line-height: 20px; white-space: nowrap; overflow: hidden; color: #eee; }
.fade { -webkit-mask-image: linear-gradient(90deg, #000 55%, transparent 100%); mask-image: linear-gradient(90deg, #000 55%, transparent 100%); }
.cls { width: 12px; height: 12px; margin-left: 13px; }
.last { border-color: transparent; margin-right: 3px; }
.active { position: relative; width: 151px; height: 43px; align-self: flex-end; margin-right: 3px; padding: 0 0 7px 11px; border: 0; border-radius: 12px 12px 0 0; background: #373737; }
.active .cls { margin-left: 12px; }
.active::before, .active::after { content: ""; position: absolute; bottom: 0; width: 14px; height: 14px; }
.active::before { left: -14px; background: radial-gradient(circle at 0 0, #000 13.5px, #373737 14px); }
.active::after { right: -14px; background: radial-gradient(circle at 100% 0, #000 13.5px, #373737 14px); }
.plus { margin-left: 14px; }
.winctl { display: flex; gap: 43px; margin-left: 100px; }
.toolbar { height: 59px; display: flex; align-items: center; padding-left: 19px; background: #373737; border-bottom: 1px solid #5c5759; border-radius: 10px 10px 0 0; }
.nav { width: 17px; height: 17px; margin-right: 28px; }
.omnibox { width: 1506px; height: 42px; margin-left: -4px; padding: 0 19px 0 6px; border-radius: 21px; background: #232428; display: flex; align-items: center; }
.info { width: 30px; height: 30px; border-radius: 50%; background: #393939; display: flex; align-items: center; justify-content: center; }
.url { margin-left: 10px; font-size: 18px; letter-spacing: -.85px; color: #fff; }
.path { color: #8f9094; letter-spacing: -.6px; }
.star { margin-left: auto; }
.star path { fill: none; stroke: #c4c4c4; stroke-width: 1.7; }
.ext { width: 22px; height: 22px; margin-left: 23px; }
.bar { width: 2px; height: 20px; margin-left: 22px; background: #000; }
.avatar { width: 25px; height: 25px; margin-left: 20px; border-radius: 50%; background: #c0360c; color: #fff; font-size: 13px; line-height: 25px; text-align: center; }
.menu { width: 45px; height: 45px; margin-left: 10px; border: 2px solid #a8c7fa; border-radius: 50%; display: flex; flex-direction: column; align-items: center; justify-content: center; gap: 3px; }
.menu i { width: 4px; height: 4px; border-radius: 50%; background: #fff; }

.page { flex: 1; font-family: "DejaVu Sans", sans-serif; font-size: 18.75px; color: #000; }
.upload { height: 35px; display: flex; align-items: center; }
.upload label { width: 152px; letter-spacing: .15px; white-space: nowrap; }
.file { display: flex; align-items: center; width: 413px; }
.none { margin-left: 5px; letter-spacing: -.07px; }
.upload button { height: 35px; padding: 0 7px; border: 1.5px solid #767676; border-radius: 3px; background: #efefef; font: inherit; letter-spacing: 0; color: #000; white-space: nowrap; }
.file button { width: 127px; }
.upload > button { width: 173px; }
.slides { position: relative; width: 1225px; margin-left: 348px; }
.arrow { position: absolute; top: 320px; width: 49px; height: 48px; padding: 0 0 4px; border: 0; background: #000; color: #fff; font-family: "DejaVu Sans", sans-serif; font-size: 16.5px; -webkit-text-stroke: .6px #fff; }
.prev { left: 0; }
.next { right: 0; width: 50px; }
.slide { font-family: "Noto Sans", sans-serif; }
.slide .it { font-style: italic; }
.slide .doc { font-family: "Liberation Serif", serif; }
.slide .hand { font-family: Lato, sans-serif; }

.taskbar { flex: none; height: 50px; display: flex; align-items: center; background: linear-gradient(90deg, #272a31 0, #252b36 90px, #2a2b33 200px, #332e30 340px, #312d2f 1300px, #302b2d); color: #fff; }
.app { flex: none; width: 62px; height: 50px; display: flex; align-items: center; justify-content: center; }
.app svg { width: 30px; height: 30px; }
.app svg.sm { width: 22px; height: 22px; }
.app:first-child { width: 60px; }
.app:nth-child(2) { margin-right: 2px; }
.app:nth-child(3) { margin-left: -1px; margin-right: 1px; }
.current { width: 61px; margin-right: 1px; background: #575355; box-shadow: inset 0 -3px #ee86dc; }
.current ~ .app { margin-left: -.1px; }
.current + .app { margin-left: 0; }
.app:nth-child(3) ~ .app:nth-child(4) { margin-right: -1px; margin-left: -1px; }
.open { background: linear-gradient(#ee86dc, #ee86dc) 5px 100% / 51px 3px no-repeat; }
.weather { flex: none; display: flex; align-items: center; gap: 10px; margin-left: 638px; width: 245px; font-size: 18px; letter-spacing: -.5px; white-space: nowrap; }
.tray { display: flex; align-items: center; gap: 11px; }
.clock { width: 76px; margin-left: 8px; display: flex; flex-direction: column; align-items: center; font-size: 14.5px; line-height: 23px; letter-spacing: -.25px; }
.note { margin-left: 18px; }
.peek { width: 1px; height: 50px; margin-left: auto; margin-right: 5px; background: #777; }
```
